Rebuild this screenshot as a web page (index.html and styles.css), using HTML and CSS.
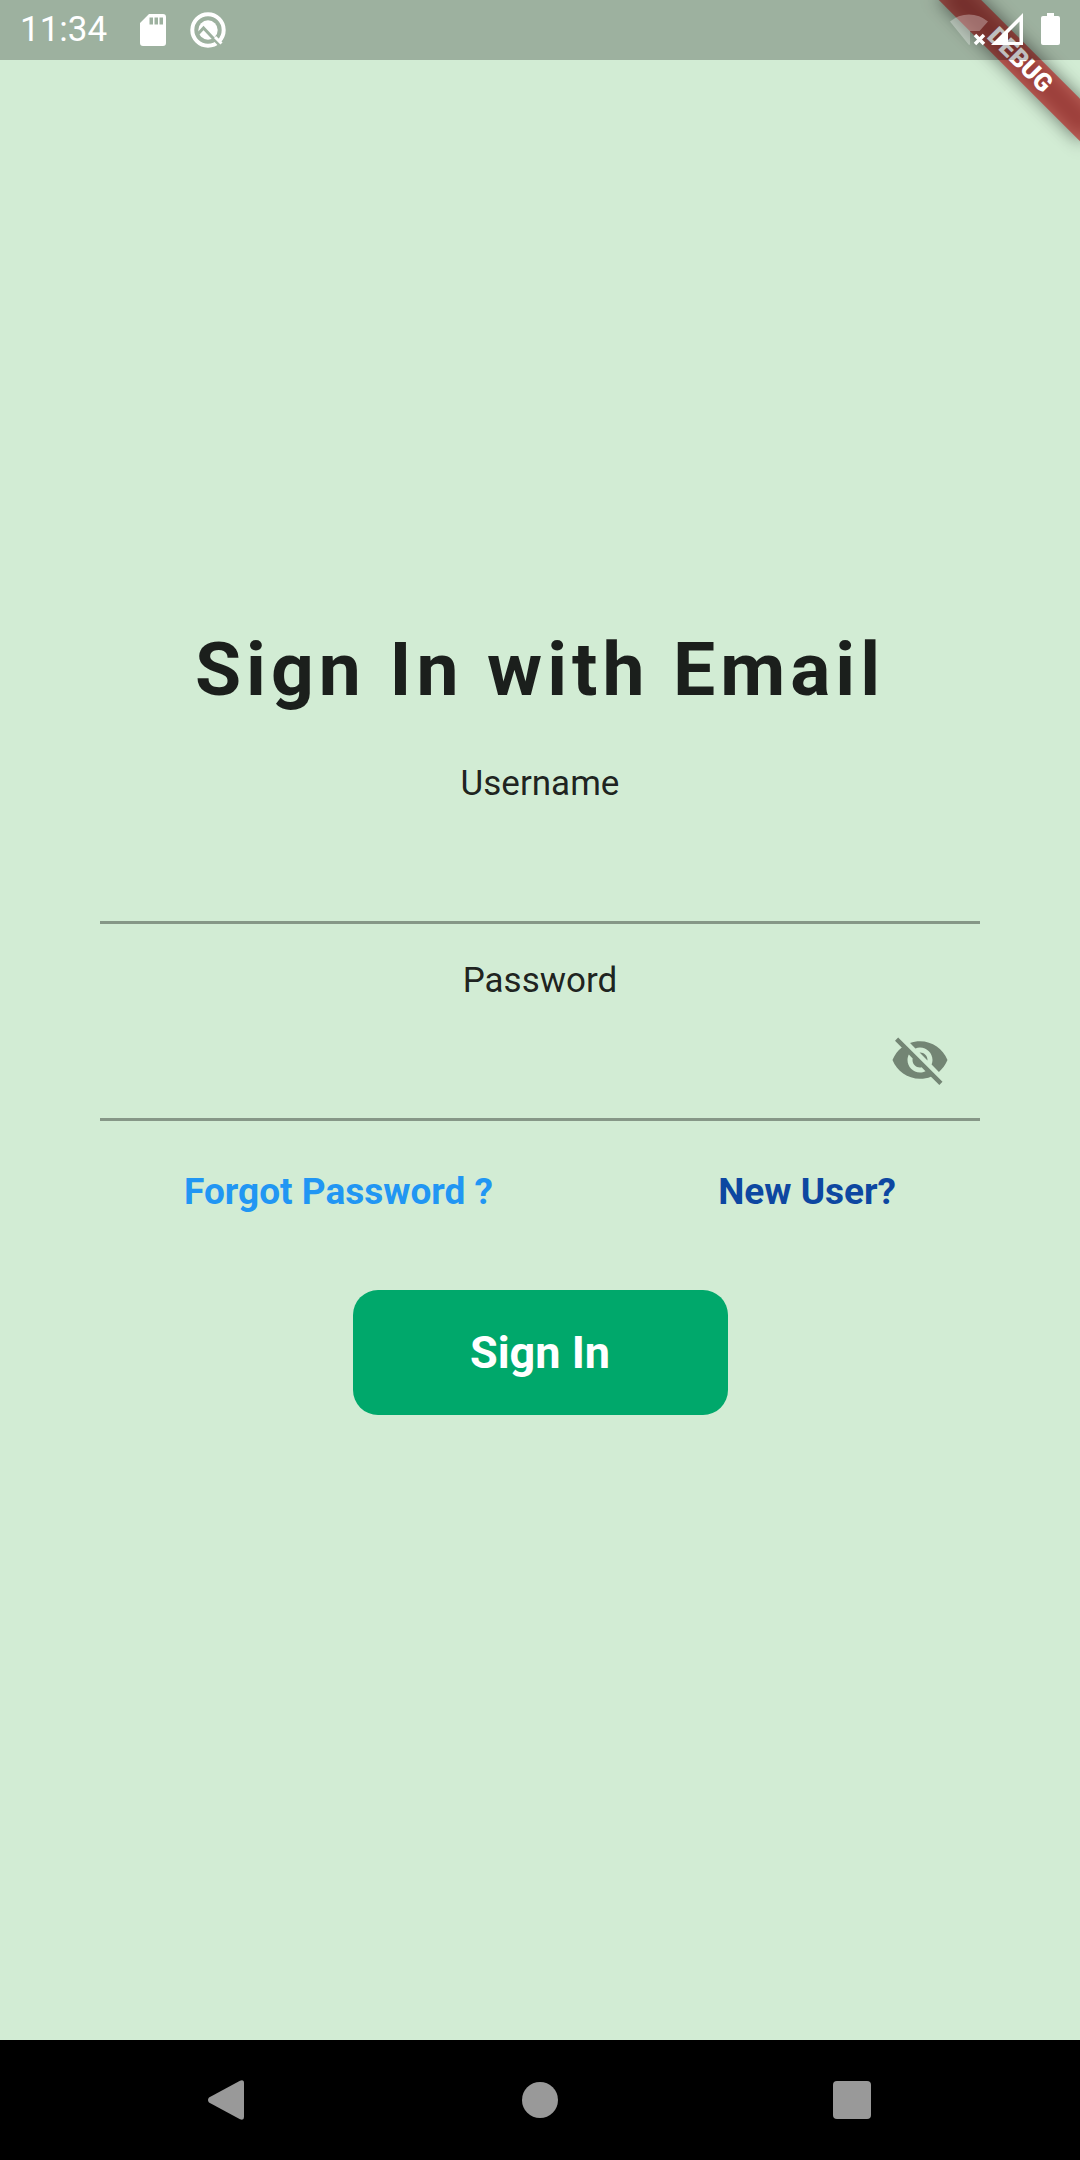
FILE: index.html
```html
<!DOCTYPE html>
<html lang="en">
<head>
<meta charset="utf-8">
<meta name="viewport" content="width=device-width, initial-scale=1">
<title>Sign In</title>
<link rel="stylesheet" href="styles.css">
</head>
<body>
<div class="banner" aria-hidden="true">
  <div class="banner-shadow"></div>
  <div class="banner-strip">DEBUG</div>
</div>

<header class="status">
  <div class="status-group status-left">
    <time class="clock">11:34</time>
    <svg class="icon-sd" width="26" height="32" viewBox="0 0 26 32"><path fill="#fff" fill-rule="evenodd" d="M9 0h14a3 3 0 0 1 3 3v26a3 3 0 0 1-3 3H3a3 3 0 0 1-3-3V9zM9.500 3.500v7h3.500v-7zM14.500 3.500v7H18v-7zM19.500 3.500v7H23v-7z"/></svg>
    <svg class="icon-q" width="36" height="36" viewBox="0 0 36 36">
      <mask id="q-cut"><rect width="36" height="36" fill="#fff"/><path fill="none" stroke="#000" stroke-width="3" d="M7.500 22.500l6-6.500L29 32.500"/></mask>
      <g mask="url(#q-cut)"><circle cx="18" cy="18" r="15.700" fill="none" stroke="#fff" stroke-width="4"/><circle cx="18" cy="18" r="9.700" fill="#fff"/></g>
      <path stroke="#fff" stroke-width="3" d="M25 25l6.500 6.500"/>
    </svg>
  </div>
  <div class="status-group status-right">
    <svg width="38" height="34" viewBox="0 0 38 34"><path fill="#fff" fill-opacity=".3" d="M0 8.500a29 29 0 0 1 38 0L29.500 18H20v13.500L19 32z"/><path stroke="#fff" stroke-width="3.500" d="M25 22l9 9M34 22l-9 9"/></svg>
    <svg class="icon-signal" width="33" height="34" viewBox="0 0 33 34"><path fill="#fff" fill-rule="evenodd" d="M32 0v32H0zM28.500 8.500L17 20v9h11.500z"/></svg>
    <svg width="19" height="34" viewBox="0 0 19 34"><path fill="#fff" d="M6 0h7v3h4a2 2 0 0 1 2 2v25a2 2 0 0 1-2 2H2a2 2 0 0 1-2-2V5a2 2 0 0 1 2-2h4z"/></svg>
  </div>
</header>

<main class="main">
  <h1 class="title">Sign In with Email</h1>
  <form class="form">
    <div class="field">
      <label class="label" for="username">Username</label>
      <div class="control"><input class="input" id="username" type="text" autocomplete="username"></div>
    </div>
    <div class="field">
      <label class="label" for="password">Password</label>
      <div class="control">
        <input class="input" id="password" type="password" autocomplete="current-password">
        <button class="reveal" type="button" aria-label="Show password">
          <svg width="60" height="60" viewBox="0 0 24 24"><path fill="currentColor" d="M12 7c2.760 0 5 2.240 5 5 0 .650-.130 1.260-.360 1.830l2.920 2.920c1.510-1.260 2.700-2.890 3.430-4.750-1.730-4.390-6-7.500-11-7.500-1.400 0-2.740.250-3.980.700l2.160 2.160C10.740 7.130 11.350 7 12 7zM2 4.270l2.280 2.280.460.460C3.080 8.300 1.780 10.020 1 12c1.730 4.390 6 7.500 11 7.500 1.550 0 3.030-.300 4.380-.840l.420.420L19.730 22 21 20.730 3.270 3 2 4.270zM7.530 9.800l1.550 1.550c-.050.210-.080.430-.080.650 0 1.660 1.340 3 3 3 .220 0 .440-.030.650-.080l1.550 1.550c-.670.330-1.410.530-2.200.530-2.760 0-5-2.240-5-5 0-.790.200-1.530.530-2.200zm4.310-.780l3.150 3.150.020-.160c0-1.660-1.340-3-3-3l-.170.010z"/></svg>
        </button>
      </div>
    </div>
    <nav class="links">
      <a class="link link-forgot" href="#forgot">Forgot Password ?</a>
      <a class="link link-new" href="#register">New User?</a>
    </nav>
    <button class="submit" type="submit">Sign In</button>
  </form>
</main>

<footer class="navbar">
  <button class="nav-button" type="button" aria-label="Back"><svg width="40" height="40" viewBox="0 0 40 40"><path fill="#999" d="M1 17.500L32 .700Q36 -.800 36 3v34q0 3.800-4 2.300L1 22.500q-2-2.500 0-5z"/></svg></button>
  <button class="nav-button" type="button" aria-label="Home"><svg width="38" height="38" viewBox="0 0 38 38"><circle cx="19" cy="19" r="18" fill="#999"/></svg></button>
  <button class="nav-button" type="button" aria-label="Recent apps"><svg width="38" height="38" viewBox="0 0 38 38"><rect width="38" height="38" rx="4" fill="#999"/></svg></button>
</footer>
</body>
</html>
```
FILE: styles.css
```css
* {
  box-sizing: border-box;
}

body {
  position: relative;
  display: flex;
  flex-direction: column;
  min-height: 100vh;
  margin: 0;
  overflow-x: hidden;
  background: #d2ecd4;
  color: rgba(0, 0, 0, 0.87);
  font-family: Roboto, "Liberation Sans", sans-serif;
}

button {
  padding: 0;
  border: 0;
  background: none;
  font-family: inherit;
  cursor: pointer;
}

svg {
  display: block;
}

/* Corner ribbon, below the translucent status bar */
.banner {
  position: absolute;
  top: 0;
  right: 0;
  width: 200px;
  height: 200px;
  overflow: hidden;
}

.banner-shadow,
.banner-strip {
  position: absolute;
  top: 45px;
  right: -40px;
  width: 200px;
  height: 30px;
  transform: rotate(45deg);
}

.banner-shadow {
  background: rgba(0, 0, 0, 0.5);
  filter: blur(9px);
}

.banner-strip {
  background: rgba(183, 28, 28, 0.63);
  color: #fff;
  font-size: 25px;
  font-weight: 900;
  line-height: 30px;
  text-align: center;
}

.status {
  position: relative;
  display: flex;
  align-items: center;
  justify-content: space-between;
  height: 60px;
  padding: 0 20px;
  background: rgba(0, 0, 0, 0.25);
  color: #fff;
}

.status-group {
  display: flex;
  align-items: center;
}

.clock {
  font-size: 35px;
  line-height: 42px;
}

.icon-sd {
  margin-left: 33px;
}

.icon-q {
  margin-left: 24px;
}

.icon-signal {
  margin: 0 17px 0 3px;
}

.main {
  display: flex;
  flex: 1;
  flex-direction: column;
  justify-content: center;
  padding: 0 100px 60px;
}

.title {
  margin: 0 0 50px;
  font-size: 75px;
  font-weight: 700;
  letter-spacing: 5px;
  line-height: 88px;
  text-align: center;
}

.form {
  display: flex;
  flex-direction: column;
}

.field {
  display: flex;
  flex-direction: column;
  margin-bottom: 36px;
}

.label {
  font-size: 35px;
  line-height: 41px;
  text-align: center;
}

.control {
  display: flex;
  height: 120px;
  border-bottom: 3px solid #869787;
}

.input {
  flex: 1;
  min-width: 0;
  padding: 0;
  border: 0;
  outline: 0;
  background: none;
  color: inherit;
  font-family: inherit;
  font-size: 40px;
}

.reveal {
  display: flex;
  align-items: center;
  justify-content: center;
  width: 120px;
  color: #738574;
}

.links {
  display: flex;
  justify-content: space-between;
  padding: 13px 84px 76px;
}

.link {
  font-size: 37px;
  font-weight: 700;
  line-height: 44px;
  text-decoration: none;
}

.link-forgot {
  color: #2196f3;
}

.link-new {
  color: #0d47a1;
}

.submit {
  align-self: center;
  width: 375px;
  height: 125px;
  border-radius: 25px;
  background: #00a86b;
  color: #fff;
  font-size: 45px;
  font-weight: 700;
}

.navbar {
  display: grid;
  grid-template-columns: repeat(3, 1fr);
  height: 120px;
  padding: 0 72px;
  background: #000;
}

.nav-button {
  display: flex;
  align-items: center;
  justify-content: center;
}
```
